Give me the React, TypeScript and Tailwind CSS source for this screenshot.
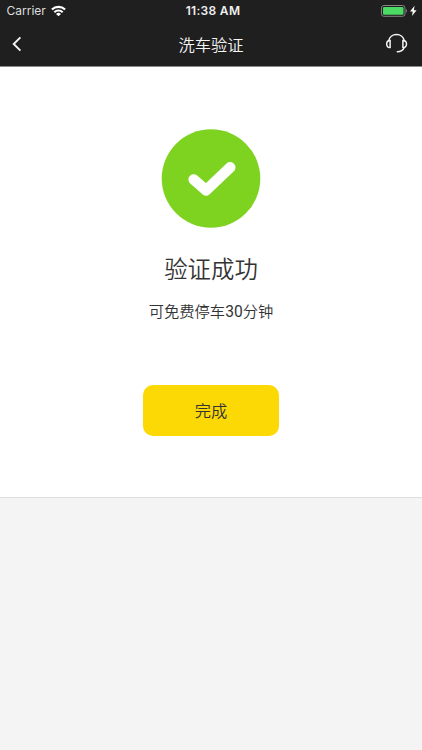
function StatusBar() {
  return (
    <div className="relative flex h-[22px] items-center justify-between pr-[5px] pl-[6.5px] text-white">
      <div className="flex items-center gap-[5px]">
        <span className="w-[39px] text-[12px] leading-[22px] font-normal text-[#dedede]">Carrier</span>
        <svg width="15" height="12" viewBox="0 0 15 12" fill="none" stroke="currentColor" strokeWidth="2.1">
          <path d="M0.9 4.5a9.5 9.5 0 0 1 13.2 0" />
          <path d="M3.3 7.2a6 6 0 0 1 8.4 0" />
          <path d="M7.5 11.3 5 8.9a3.6 3.6 0 0 1 5 0z" fill="currentColor" stroke="none" />
        </svg>
      </div>
      <span className="absolute inset-x-0 pl-[4px] text-center text-[12px] leading-[22px] font-semibold tracking-[0.3px] text-[#f0f0f0]">11:38 AM</span>
      <svg width="36" height="12" viewBox="0 0 36 12" fill="none">
        <rect x="0.5" y="0.5" width="23.5" height="10.8" rx="2.4" stroke="#858585" />
        <rect x="2" y="2" width="20.5" height="7.8" rx="1.2" fill="#4cd964" />
        <path d="M25.2 4.1c1.2.5 1.2 3.1 0 3.6z" fill="#858585" />
        <path d="M33.6 0.8 29 6.6h2.7L31 11l4.6-5.8h-2.8z" fill="#fff" />
      </svg>
    </div>
  );
}

function NavBar() {
  return (
    <div className="grid h-[44px] grid-cols-[60px_1fr_60px] items-center text-[#f5f5f5]">
      <button type="button" aria-label="返回" className="pl-[11px]">
        <svg width="12" height="16" viewBox="0 0 12 16" fill="none" stroke="currentColor" strokeWidth="1.9">
          <path d="M9.4 1.4 2.7 8l6.7 6.6" />
        </svg>
      </button>
      <h1 className="pt-px text-center text-[16.3px] leading-[24px] font-[350]">洗车验证</h1>
      <button type="button" aria-label="客服" className="flex justify-end pr-[14.5px] pb-[2px]">
        <svg width="22" height="20" viewBox="0 0 22 20" fill="none" stroke="currentColor" strokeWidth="1.5" strokeLinecap="round">
          <path d="M2.7 7.9C3.3 4.1 6.5 1.4 10.5 1.4s7.2 2.7 7.8 6.5" />
          <path d="M4.1 7.5v6.9C1.9 14.8.7 13.2.7 11s1.2-3.9 3.4-3.5z" />
          <path d="M16.9 7.5v6.9c2.2.4 3.6-1.2 3.6-3.4s-1.4-3.9-3.6-3.5z" />
          <path d="M18.1 14.7c-1 2.5-3.2 3.9-6.8 4" />
        </svg>
      </button>
    </div>
  );
}

export default function App() {
  return (
    <div className="flex h-[750px] w-[422px] flex-col bg-[#f4f4f4] font-['Inter','Noto_Sans_CJK_SC',sans-serif] text-[#333]">
      <header className="h-[67px] border-b border-[#8b8b8b] bg-[#1f1f1f]">
        <StatusBar />
        <NavBar />
      </header>
      <main className="flex h-[431px] flex-col items-center border-b border-[#dedede] bg-white pt-[62px]">
        <svg width="100" height="100" viewBox="0 0 100 100" fill="none">
          <circle cx="50" cy="49.5" r="49.3" fill="#7ed321" />
          <path d="M32.7 50.5 45 61.3l24.2-23" stroke="#fff" strokeWidth="10.6" strokeLinecap="round" strokeLinejoin="round" />
        </svg>
        <h2 className="mt-[23px] text-[23.4px] leading-[36px] font-[350]">验证成功</h2>
        <p className="mt-[10px] h-[24px] font-['Noto_Sans_CJK_SC',sans-serif] text-[15.3px] leading-[24px] font-[350]">
          可免费停车<span className="font-['Roboto',sans-serif] text-[15.6px] font-normal">30</span>分钟
        </p>
        <button type="button" className="mt-[63px] h-[51px] w-[136px] rounded-[10px] bg-[#fcd905] pt-[2px] text-[16.3px] font-[350]">
          完成
        </button>
      </main>
    </div>
  );
}
